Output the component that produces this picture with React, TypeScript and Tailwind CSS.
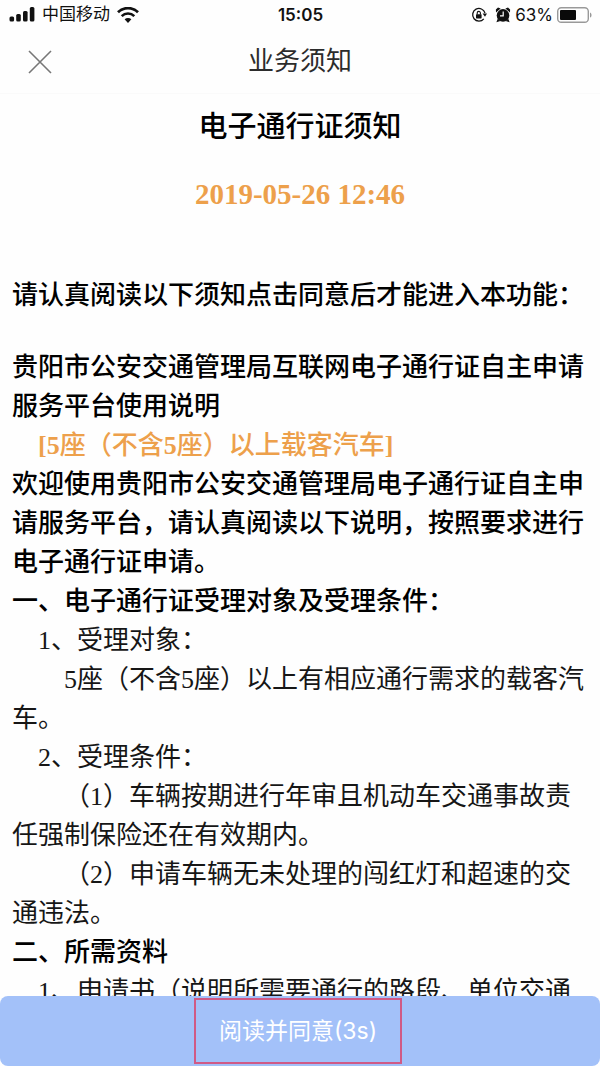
import React from 'react';

interface NoticeLine {
  text: string;
  tone: 'bold' | 'plain' | 'accent';
  indent?: 'one' | 'two';
  spaced?: boolean;
}

const lines: NoticeLine[] = [
  { text: '请认真阅读以下须知点击同意后才能进入本功能：', tone: 'bold', spaced: true },
  { text: '贵阳市公安交通管理局互联网电子通行证自主申请服务平台使用说明', tone: 'bold' },
  { text: '[5座（不含5座）以上载客汽车]', tone: 'accent', indent: 'one' },
  {
    text: '欢迎使用贵阳市公安交通管理局电子通行证自主申请服务平台，请认真阅读以下说明，按照要求进行电子通行证申请。',
    tone: 'bold'
  },
  { text: '一、电子通行证受理对象及受理条件：', tone: 'bold' },
  { text: '1、受理对象：', tone: 'plain', indent: 'one' },
  { text: '5座（不含5座）以上有相应通行需求的载客汽车。', tone: 'plain', indent: 'two' },
  { text: '2、受理条件：', tone: 'plain', indent: 'one' },
  { text: '（1）车辆按期进行年审且机动车交通事故责任强制保险还在有效期内。', tone: 'plain', indent: 'two' },
  { text: '（2）申请车辆无未处理的闯红灯和超速的交通违法。', tone: 'plain', indent: 'two' },
  { text: '二、所需资料', tone: 'bold' },
  { text: '1、申请书（说明所需要通行的路段、单位交通', tone: 'plain', indent: 'one' }
];

const tones = {
  bold: 'font-medium text-black',
  plain: 'text-[#161616]',
  accent: 'font-medium text-[#eda04b]'
};

const indents = {
  one: 'indent-[1em]',
  two: 'indent-[2em]'
};

const StatusBar: React.FC = () => (
  <div className="grid h-[30px] grid-cols-3 items-center pr-2 pl-[9px] text-[#111]">
    <div className="flex items-center gap-[7px]">
      <svg className="h-4 w-[26px]" viewBox="0 0 26 16" fill="currentColor" aria-hidden="true">
        <rect x="0.5" y="9.5" width="4.6" height="5" rx="1.5" />
        <rect x="7.2" y="7" width="4.6" height="7.5" rx="1.5" />
        <rect x="14" y="4" width="4.6" height="10.5" rx="1.5" />
        <rect x="20.8" y="0" width="4.6" height="14.5" rx="1.5" />
      </svg>
      <span className="text-[17px] leading-6 whitespace-nowrap">中国移动</span>
      <svg className="h-4 w-[22px]" viewBox="0 0 22 16" fill="none" stroke="currentColor" aria-hidden="true">
        <path d="M1 5.2a14.4 14.4 0 0 1 20 0" strokeWidth="2.8" />
        <path d="M4.7 9.1a9 9 0 0 1 12.6 0" strokeWidth="2.6" />
        <path d="M11 16 7.6 12.3a4.9 4.9 0 0 1 6.8 0Z" fill="currentColor" stroke="none" />
      </svg>
    </div>
    <span className="text-center font-[Inter] text-[17px] leading-6 font-semibold">15:05</span>
    <div className="flex items-center justify-end gap-1">
      <svg className="mr-1 h-4 w-4" viewBox="0 0 16 16" fill="none" stroke="currentColor" aria-hidden="true">
        <path d="M12.8 11.8A6.3 6.3 0 1 1 14 6" strokeWidth="1.3" />
        <path d="M11.6 6.6h4.4l-2 3.2Z" fill="currentColor" stroke="none" />
        <rect x="5" y="7.2" width="5.6" height="4.2" rx="0.6" fill="currentColor" stroke="none" />
        <path d="M6.2 7.4V6a1.6 1.6 0 0 1 3.2 0v1.4" strokeWidth="1.1" />
      </svg>
      <svg className="h-4 w-4" viewBox="0 0 16 16" fill="currentColor" aria-hidden="true">
        <circle cx="8" cy="8.4" r="6.3" />
        <path d="M1 5.6 5.6 1.4 3 .6.9 2.6ZM15 5.6 10.4 1.4l2.6-.8 2.1 2Z" />
        <path d="M2.8 11.6 1.4 15.2l4-1.2ZM13.2 11.6l1.4 3.6-4-1.2Z" />
        <path d="M8.2 4.6v4.2H5" fill="none" stroke="white" strokeWidth="1.2" />
      </svg>
      <span className="font-[Inter] text-[17px] leading-6">63%</span>
      <svg className="h-4 w-[35px]" viewBox="0 0 35 16" aria-hidden="true">
        <rect x="0.7" y="0.7" width="30.6" height="14.6" rx="3.6" fill="none" stroke="#999" strokeWidth="1.4" />
        <rect x="3" y="3" width="16" height="10" rx="1" fill="#0a0a0a" />
        <path d="M33 5.4c2 .8 2 4.4 0 5.2Z" fill="#999" />
      </svg>
    </div>
  </div>
);

// Digits and brackets in accent lines are heavier than the characters around them
const AccentText: React.FC<{ text: string }> = ({ text }) => (
  <>
    {text.split(/([[\]\d])/).map((part, index) =>
      index % 2 === 1 ? (
        <b key={index} className="font-bold">
          {part}
        </b>
      ) : (
        part
      )
    )}
  </>
);

const App: React.FC = () => {
  return (
    <div
      lang="zh-CN"
      className="flex h-screen flex-col bg-[#fefefe] font-['Liberation_Sans','Noto_Sans_CJK_SC',sans-serif]"
    >
      <StatusBar />

      <header className="grid h-16 shrink-0 grid-cols-[52px_1fr_52px] items-center border-b border-[#fafafa] px-[14px]">
        <button type="button" aria-label="关闭" className="flex h-12 items-center justify-center text-[#777]">
          <svg className="h-6 w-6" viewBox="0 0 24 24" fill="none" stroke="currentColor" strokeWidth="1.6">
            <path d="M1 1 23 23M23 1 1 23" />
          </svg>
        </button>
        <h1 className="text-center text-[26px] leading-[39px] text-[#2c2c2c]">业务须知</h1>
      </header>

      <main className="min-h-0 flex-1 overflow-y-auto px-3 pt-[14px] font-['Liberation_Serif','Noto_Sans_CJK_SC',serif] [scrollbar-width:none]">
        <h2 className="text-center text-[29px] leading-[39px] font-medium text-black">电子通行证须知</h2>
        <p className="mt-7 mb-[62px] text-center text-[29px] leading-[39px] font-bold text-[#eda04b]">
          2019-05-26 12:46
        </p>
        {lines.map((line) => (
          <p
            key={line.text}
            className={`text-[26px] leading-[39px] ${tones[line.tone]} ${line.indent ? indents[line.indent] : ''} ${
              line.spaced ? 'mb-[33px]' : ''
            }`}
          >
            {line.tone === 'accent' ? <AccentText text={line.text} /> : line.text}
          </p>
        ))}
      </main>

      <button
        type="button"
        className="flex h-[70px] shrink-0 items-center justify-center rounded-lg bg-[#a3c1f9] pr-1 text-white"
      >
        <span className="border-2 border-[#d05a86] px-[23px] py-[13px] font-[Inter,'Noto_Sans_CJK_SC',sans-serif] text-[23px] leading-9">
          阅读并同意(3s)
        </span>
      </button>
    </div>
  );
};

export default App;
